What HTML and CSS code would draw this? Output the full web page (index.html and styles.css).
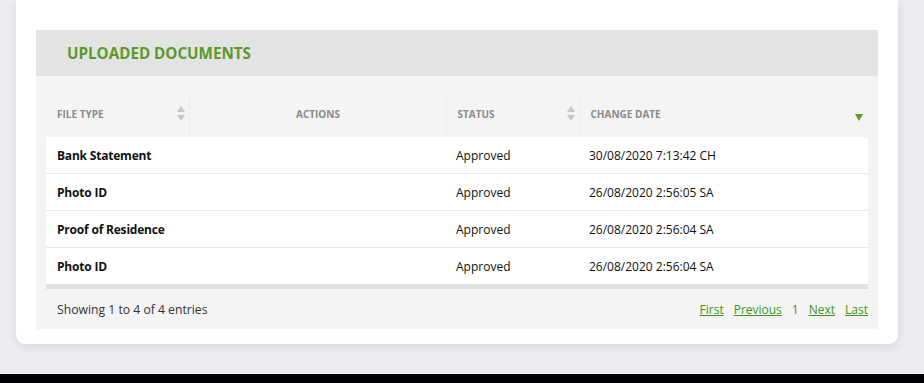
FILE: index.html
```html
<!DOCTYPE html>
<html>
<head>
<meta charset="utf-8">
<link rel="stylesheet" href="styles.css">
</head>
<body>
<div class="page">
  <div class="card">
    <section class="panel">
      <header class="panel-head">
        <h2 class="panel-title">UPLOADED DOCUMENTS</h2>
      </header>
      <div class="panel-body">
        <table class="docs">
          <colgroup>
            <col class="c1"><col class="c2"><col class="c3"><col class="c4">
          </colgroup>
          <thead>
            <tr>
              <th class="sortable">FILE TYPE<span class="sort-both"><svg width="8" height="17" viewBox="0 0 8 17"><path d="M4 1L8 7H0Z" fill="#c8c8c8"/><path d="M4 16L8 10H0Z" fill="#c8c8c8"/></svg></span></th>
              <th class="center">ACTIONS</th>
              <th class="sortable">STATUS<span class="sort-both"><svg width="8" height="17" viewBox="0 0 8 17"><path d="M4 1L8 7H0Z" fill="#c8c8c8"/><path d="M4 16L8 10H0Z" fill="#c8c8c8"/></svg></span></th>
              <th class="sortable last">CHANGE DATE<span class="sort-desc"><svg width="8" height="7" viewBox="0 0 8 7"><path d="M0 0H8L4 7Z" fill="#5a9e1e"/></svg></span></th>
            </tr>
          </thead>
          <tbody>
            <tr><td class="name">Bank Statement</td><td></td><td>Approved</td><td>30/08/2020 7:13:42 CH</td></tr>
            <tr><td class="name">Photo ID</td><td></td><td>Approved</td><td>26/08/2020 2:56:05 SA</td></tr>
            <tr><td class="name">Proof of Residence</td><td></td><td>Approved</td><td>26/08/2020 2:56:04 SA</td></tr>
            <tr><td class="name">Photo ID</td><td></td><td>Approved</td><td>26/08/2020 2:56:04 SA</td></tr>
          </tbody>
        </table>
        <div class="table-foot">
          <div class="info">Showing 1 to 4 of 4 entries</div>
          <nav class="pager">
            <a href="#">First</a>
            <a href="#">Previous</a>
            <span class="current">1</span>
            <a href="#">Next</a>
            <a href="#">Last</a>
          </nav>
        </div>
      </div>
    </section>
  </div>
</div>
<div class="bottom-bar"></div>
</body>
</html>
```
FILE: styles.css
```css
html, body {
  margin: 0;
  padding: 0;
}
body {
  background: #ebecef;
  font-family: "Open Sans", "Noto Sans", sans-serif;
  width: 924px;
  height: 383px;
  overflow: hidden;
  display: flex;
  flex-direction: column;
}
.page {
  flex: 1;
  padding: 0 26px 0 16px;
}
.card {
  background: #fff;
  border-radius: 0 0 9px 9px;
  box-shadow: 0 2px 10px rgba(0, 0, 0, 0.09);
  padding: 30px 20px 15px;
}
.panel-head {
  background: #e3e3e3;
  height: 46px;
  display: flex;
  align-items: center;
  padding-left: 31px;
}
.panel-title {
  margin: 0;
  font-size: 15.2px;
  font-weight: 700;
  color: #5b9a28;
  letter-spacing: 0;
}
.panel-body {
  background: #f4f4f4;
  padding: 20px 10px 0;
}
.docs {
  width: 100%;
  border-collapse: collapse;
  table-layout: fixed;
  font-size: 12px;
}
.c1 { width: 143px; }
.c2 { width: 257px; }
.c3 { width: 133px; }
.c4 { width: auto; }
.docs th {
  position: relative;
  height: 35px;
  padding: 0 10px 6px 11px;
  text-align: left;
  font-size: 10px;
  font-weight: 700;
  color: #8a8a8a;
  border-right: 1px solid #ececec;
  vertical-align: middle;
}
.docs th.center { text-align: center; }
.docs th.last { border-right: 0; }
.sort-both {
  position: absolute;
  right: 4px;
  top: 9px;
  display: flex;
}
.sort-desc {
  position: absolute;
  right: 5px;
  top: 18px;
  display: flex;
}
.docs tbody tr {
  background: #fff;
  border-top: 1px solid #e9e9e9;
}
.docs tbody tr:first-child { border-top: 0; }
.docs tbody tr:last-child { border-bottom: 5px solid #e2e2e2; }
.docs td {
  height: 36px;
  padding: 0 10px 0 11px;
  color: #111;
  vertical-align: middle;
  white-space: nowrap;
}
.docs td:nth-child(3) { padding-left: 10px; }
.docs td:nth-child(4) { padding-left: 10px; }
.docs td.name { font-weight: 700; letter-spacing: -0.2px; }
.table-foot {
  display: flex;
  justify-content: space-between;
  align-items: center;
  height: 40px;
  padding-left: 11px;
  font-size: 12.2px;
  color: #333;
}
.pager {
  display: flex;
  gap: 10px;
  font-size: 12px;
}
.pager a {
  color: #3b951c;
  text-decoration: underline;
}
.pager .current { color: #4d8a2a; }
.bottom-bar {
  height: 9px;
  background: #000;
  flex: none;
}
```
